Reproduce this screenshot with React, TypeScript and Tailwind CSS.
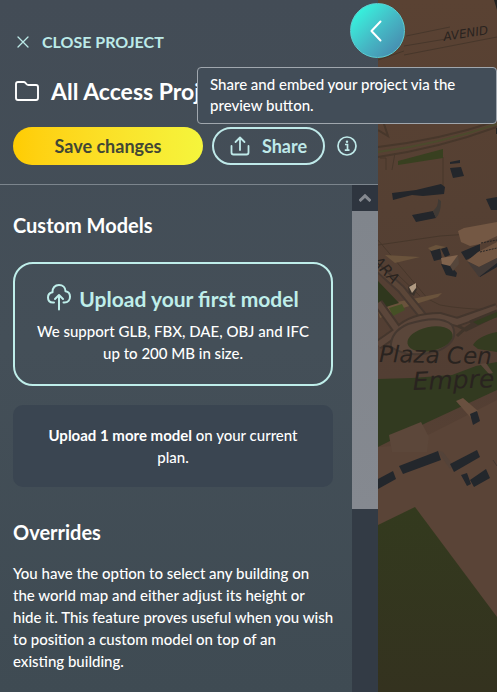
import React from "react";

function MapView() {
  return (
    <svg
      className="absolute inset-0 h-full w-full"
      viewBox="378 0 119 692"
      preserveAspectRatio="xMinYMin slice"
      role="img"
      aria-label="World map"
    >
      <defs>
        <linearGradient id="ground" x1="0" y1="0" x2="0" y2="1">
          <stop offset="0" stopColor="#5a4233" />
          <stop offset="0.3" stopColor="#554033" />
          <stop offset="0.55" stopColor="#523e33" />
          <stop offset="0.75" stopColor="#5b4435" />
          <stop offset="1" stopColor="#523e32" />
        </linearGradient>
        <linearGradient id="field" x1="0" y1="0" x2="0" y2="1">
          <stop offset="0" stopColor="#333a1e" />
          <stop offset="1" stopColor="#34321f" />
        </linearGradient>
      </defs>
      <rect x="378" y="0" width="119" height="692" fill="url(#ground)" />

      {/* streets */}
      <g fill="none" stroke="#47372b" strokeWidth="1">
        <path d="M406 36 L450 27 M404 46 L446 39 M404 55 L497 37 M378 60 L404 51" />
        <path d="M378 130 L388 136 L383 121 M378 147 Q440 140 497 121 M378 157 Q440 148 497 127" strokeWidth="2" />
        <path d="M378 152 Q440 144 497 124" stroke="#4c4a2d" strokeWidth="2" />
        <path d="M380 158 H386 V170 M395 153 L392 170" />
        <path d="M378 245 L440 236 L470 234 M443 157 V188" />
        <path d="M378 240 L428 299 L440 305 M398 275 L420 296" />
        <path d="M440 305 Q460 309 497 310" />
      </g>
      <polygon points="398,161 443,149 443,158 398,165" fill="#384020" />

      <path d="M385 255 L420 257 L395 263Z M378 311 L397 302 L442 293 L438 297 L400 309 L380 318Z" fill="#6a533c" />
      <path d="M378 281 L399 303 L389 306 L378 310Z" fill="#2f371d" />
      <path d="M389 308 L402 304 L405 310 L393 316Z" fill="#455025" />
      <g fill="none">
        <path d="M378 268 L401 289 L431 326" stroke="#463830" strokeWidth="9" />
        <path d="M378 268 L401 289 L431 326" stroke="#5b4638" strokeWidth="5" />
        <path d="M378 303 L398 331 M378 345 L398 331 Q412 317 440 317 L457 322 L497 308" stroke="#44362d" strokeWidth="10" />
        <path d="M378 303 L398 331 M378 345 L398 331 Q412 317 440 317 L457 322 L497 308" stroke="#5b463a" strokeWidth="6" />
        <path d="M458 326 L466 330 L497 315 M457 336 Q475 318 497 316 M470 322 L497 311" stroke="#41352b" strokeWidth="3" />
      </g>
      <path d="M391 347 Q390 332 408 324 Q440 314 452 325 Q460 340 440 350 Q410 360 391 347Z" fill="#5a463a" stroke="#453830" strokeWidth="2" />
      <ellipse cx="430" cy="339" rx="23" ry="12" transform="rotate(-12 430 339)" fill="#343b20" />
      <path d="M473 322 L497 312 V317 L478 325Z M473 345 Q478 336 497 332 V352 L478 349Z" fill="#343b20" />
      <path d="M378 379 L412 378 L452 375 L476 366 L497 362 V390 L428 422 L378 447Z" fill="#323a20" />
      <path d="M480 364 L486 363 L493 373 L489 374Z" fill="#5a463a" />
      <path d="M378 447 L392 446 L430 434 L497 400 V617 L415 507 L378 525Z" fill="#5a4437" />
      <path d="M389 435 L421 422 L429 437 L427 452 L392 452Z" fill="#5c473a" />

      {/* buildings */}
      <g fill="#23262b">
        <path d="M392 193 L416 190 L441 184 L445 187 L444 194 L423 196 L412 195 L393 200Z" />
        <path d="M412 215 L433 211 L436 218 L416 222Z" />
        <path d="M450 168 L461 167 L464 176 L453 178Z M450 162 L460 160 V163 L450 164Z" />
        <path d="M486 199 L497 197 V210 L491 210Z" />
        <path d="M430 250 L440 248 L442 259 L434 261Z M441 249 L447 247 L450 255 L445 257Z" />
        <path d="M441 264 L450 265 L457 273 L456 277 L446 275Z" />
        <path d="M461 252 L480 244 V254 L466 260Z" />
        <path d="M476 270 L497 259 V267 L480 277Z" />
      </g>
      <path d="M433 211 Q439 206 438 199 L441 201 Q441 213 436 218Z" fill="#403a35" />
      <path d="M458 231 L464 228 L497 222 V236 L480 244 L470 246 L461 242Z" fill="#745844" />
      <path d="M478 252 L497 242 V258 L479 267 L467 261Z" fill="#725642" />
      <path d="M467 261 L479 267 L497 258 V263 L479 277Z" fill="#443b37" />
      <path d="M441 258 L458 255 L456 263 L450 266 L442 264Z" fill="#80634d" />
      <path d="M458 255 L459 264 L453 271 L450 266Z" fill="#56463b" />
      <path d="M428 248 L436 245 L446 247 L431 251Z" fill="#6a533c" />
      <path d="M481 243 L497 240 M480 252 L497 248" stroke="#292625" strokeDasharray="2 1" />
      <path d="M408 287 L412 284 L417 289 L414 296 L409 293Z" fill="#3b322b" />
      <path d="M409 287 L416 283 L416 288 L412 293Z" fill="#b09a82" />
      <path d="M456 401 L463 398 L478 411 L471 418Z" fill="#69503f" />
      <path d="M437 450 L443 452 L453 465 L450 469Z" fill="#544339" />
      <g fill="#23272c">
        <path d="M470 414 L477 411 L480 421 L473 425Z" />
        <path d="M399 466 L438 451 L441 460 L403 474Z" />
        <path d="M450 464 L477 450 L480 457 L454 472Z" />
        <path d="M378 479 L393 471 L396 479 L378 489Z" />
        <path d="M461 475 L467 473 L471 484 L467 486Z M470 480 L486 469 L490 478 L474 487Z" />
      </g>
      <path d="M378 525 L415 507 L497 617 V692 H378Z" fill="url(#field)" />
      <path d="M494 0 H497 V10Z M496 128 H497 V134 H496Z" fill="#252321" />
      <path d="M493 460 L497 466" stroke="#453831" />

      <g fill="#29231f" className="font-['DejaVu_Sans',sans-serif] italic">
        <text x="444" y="41" fontSize="12" transform="rotate(-9 444 41)">AVENID</text>
        <text x="379" y="362" fontSize="23" transform="rotate(1 379 362)">Plaza Cen</text>
        <text x="413" y="390" fontSize="25" transform="rotate(-2 413 390)">Empre</text>
        <text x="372" y="262" fontSize="15" transform="rotate(48 372 262)">ARA</text>
      </g>
    </svg>
  );
}

function CloseIcon() {
  return (
    <svg className="h-3 w-3" viewBox="0 0 12 12" fill="none" stroke="currentColor" strokeWidth="1.3" strokeLinecap="round" aria-hidden="true">
      <path d="M1 1 L11 11 M11 1 L1 11" />
    </svg>
  );
}

function FolderIcon() {
  return (
    <svg className="h-5 w-6 shrink-0" viewBox="0 0 24 20" fill="none" stroke="currentColor" strokeWidth="1.9" strokeLinejoin="round" aria-hidden="true">
      <path d="M3 1 H8.5 Q9.8 1 10.6 2 L11.4 3 Q12.2 4 13.5 4 H21 Q23 4 23 6 V17 Q23 19 21 19 H3 Q1 19 1 17 V3 Q1 1 3 1Z" />
    </svg>
  );
}

function ShareIcon() {
  return (
    <svg className="h-5 w-5" viewBox="0 0 20 20" fill="none" stroke="currentColor" strokeWidth="1.8" strokeLinecap="round" strokeLinejoin="round" aria-hidden="true">
      <path d="M10 14 V2 M5.5 6 L10 1.5 L14.5 6 M1.5 10 V16.5 Q1.5 18.5 3.5 18.5 H16.5 Q18.5 18.5 18.5 16.5 V10" />
    </svg>
  );
}

function InfoIcon() {
  return (
    <svg className="h-5 w-5" viewBox="0 0 20 20" fill="none" stroke="currentColor" strokeWidth="1.7" aria-hidden="true">
      <circle cx="10" cy="10" r="9" />
      <path d="M8 8.5 H10.5 V14 M7.8 14.2 H12.5" />
      <circle cx="10" cy="5.8" r="1.2" fill="currentColor" stroke="none" />
    </svg>
  );
}

function CloudUploadIcon() {
  return (
    <svg className="h-7 w-6" viewBox="0 0 24 28" fill="none" stroke="currentColor" strokeWidth="2" strokeLinecap="round" strokeLinejoin="round" aria-hidden="true">
      <path d="M7 19.5 H6 C2.8 19.5 1 17.3 1 14.5 C1 11.8 2.8 9.8 5.5 9.3 C5.3 5 8 2 12 2 C15.8 2 18.4 4.6 18.5 8.2 C21.3 8.5 23 10.8 23 13.8 C23 17 21 19.5 17.5 19.5 H16.5" />
      <path d="M12 26.5 V12 M8 16 L12 12 L16 16" />
    </svg>
  );
}

export default function App() {
  return (
    <main className="relative flex h-screen overflow-hidden bg-[#554033] font-['Lato','Noto_Sans',sans-serif] text-white">
      <aside className="flex w-[378px] shrink-0 flex-col bg-linear-to-b from-[#434c56] via-[#444f58] to-[#3f4b53]">
        <header className="flex flex-col border-b border-[#7c858d] px-[13px] pt-[30px] pb-[19px]">
          <button className="flex h-6 items-center gap-[13px] self-start pl-1 text-base font-bold text-[#bceae8]">
            <CloseIcon />
            CLOSE PROJECT
          </button>
          <div className="mt-[21px] flex h-8 items-center gap-3 pl-[2px]">
            <FolderIcon />
            <h1 className="text-[23px] leading-8 font-bold whitespace-nowrap">All Access Project</h1>
          </div>
          <div className="mt-[20px] flex items-center gap-[9px]">
            <button className="h-[38px] w-[190px] rounded-full bg-linear-to-r from-[#ffcc02] to-[#f5f53c] text-lg font-bold text-[#424735]">
              Save changes
            </button>
            <button className="flex h-[38px] w-[113px] items-center justify-center gap-3 rounded-full border-2 border-[#bfe9e9] text-lg font-bold text-[#bfe9e9]">
              <ShareIcon />
              Share
            </button>
            <button aria-label="About sharing" className="ml-[3px] text-[#bfe9e9]">
              <InfoIcon />
            </button>
          </div>
        </header>

        <div className="flex min-h-0 flex-1">
          <div className="min-w-0 flex-1 overflow-hidden pt-[26px] pr-2 pl-[13px]">
            <h2 className="text-[20px] leading-7 font-bold">Custom Models</h2>
            <div className="mt-[23px] flex flex-col gap-[19px] pr-[11px]">
              <button className="flex h-[124px] w-full flex-col items-center rounded-[20px] border-2 border-[#bfeeea] pt-[19px]">
                <span className="flex h-8 items-center gap-2 text-[21px] font-bold text-[#bfeeea]">
                  <span className="-mt-1">
                    <CloudUploadIcon />
                  </span>
                  Upload your first model
                </span>
                <span className="mt-[5px] px-3 text-[15px] leading-[22px] font-medium">
                  We support GLB, FBX, DAE, OBJ and IFC
                  <br />
                  up to 200 MB in size.
                </span>
              </button>
              <p className="rounded-[10px] bg-[#3a4551] px-8 py-[19px] text-center text-[15px] leading-[22px] font-medium">
                <strong className="font-bold">Upload 1 more model</strong> on your current plan.
              </p>
            </div>
            <h2 className="mt-[31px] text-[20px] leading-7 font-bold">Overrides</h2>
            <p className="mt-[16px] text-[15px] leading-[22px] font-medium">
              You have the option to select any building on
              <br />
              the world map and either adjust its height or
              <br />
              hide it. This feature proves useful when you wish
              <br />
              to position a custom model on top of an
              <br />
              existing building.
            </p>
          </div>
          <div className="flex w-[26px] shrink-0 flex-col bg-[#333b45]">
            <button aria-label="Scroll up" className="flex h-[26px] items-center justify-center bg-[#2e353f] text-[#858990]">
              <svg className="h-2 w-3" viewBox="0 0 12 8" fill="none" stroke="currentColor" strokeWidth="3" aria-hidden="true">
                <path d="M0.5 7 L6 1.8 L11.5 7" />
              </svg>
            </button>
            <div className="h-[298px] bg-linear-to-b from-[#80858c] to-[#858990]" />
          </div>
        </div>
      </aside>

      <section className="relative min-w-0 flex-1">
        <MapView />
      </section>

      <button
        aria-label="Collapse panel"
        className="absolute top-[3px] left-[350px] flex h-[55px] w-[55px] items-center justify-center rounded-full border border-[#5ccfd2] bg-linear-to-br from-[#36efdc] from-15% via-[#45b5c3] via-55% to-[#467fa9] pr-[3px]"
      >
        <svg className="h-6 w-3" viewBox="0 0 12 24" fill="none" stroke="currentColor" strokeWidth="2" strokeLinecap="round" strokeLinejoin="round" aria-hidden="true">
          <path d="M10.5 2.5 L1.5 12 L10.5 21.5" />
        </svg>
      </button>
      <div
        role="tooltip"
        className="absolute top-[67px] left-[197px] w-[300px] rounded-[4px] border border-[#a0a7ae] bg-[#424d58] px-3 pt-[6px] pb-[7px] text-[15px] leading-[21px] font-medium"
      >
        Share and embed your project via the preview button.
      </div>
    </main>
  );
}
